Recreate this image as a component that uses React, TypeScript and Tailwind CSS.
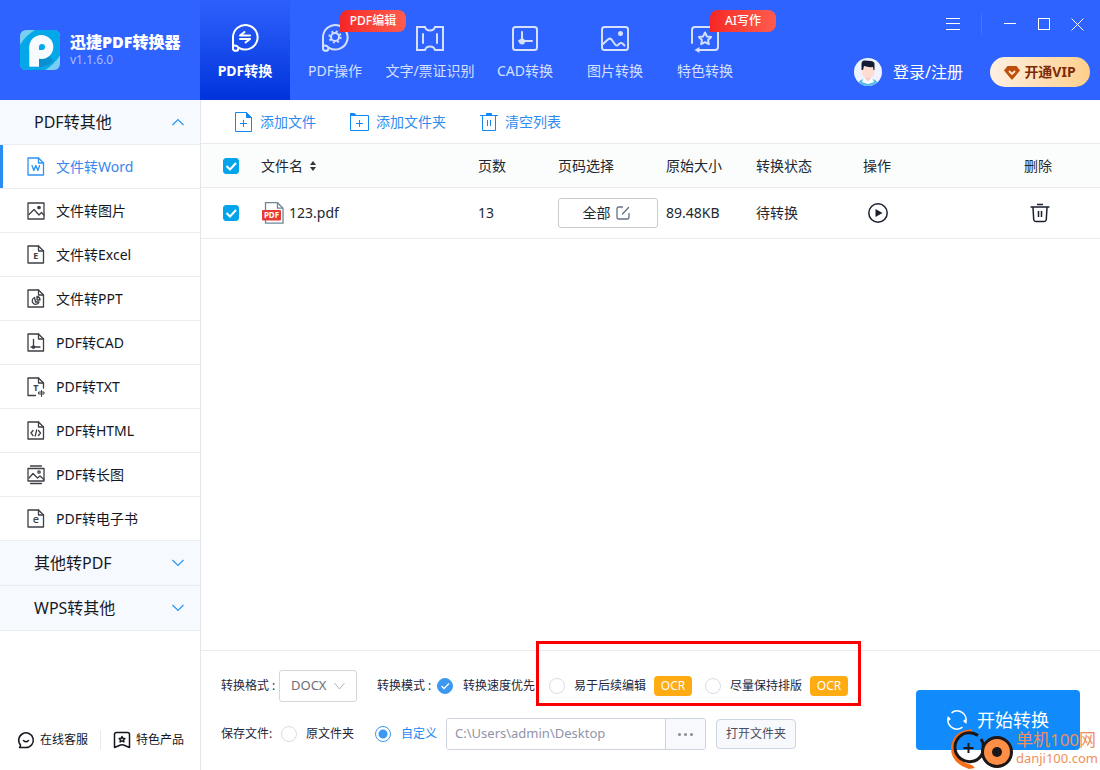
import { useState } from 'react';
import type { ReactNode } from 'react';
import clsx from 'clsx';

const BrandLogo = () => (
  <svg className="w-10 h-10 shrink-0 rounded-md" viewBox="0 0 40 40" aria-hidden="true">
    <rect width="40" height="40" fill="#78cff2" />
    <ellipse cx="20" cy="20" rx="30" ry="19" transform="rotate(-45 20 20)" fill="#04a8e9" />
    <path d="M19 25l3 4 7.500-2.500 4 4c-3 4-8 6.500-14.500 6.500z" fill="#0b8fd0" />
    <circle cx="21.300" cy="17" r="12" fill="#f7fbff" />
    <rect x="9.300" y="17" width="9.700" height="19.700" fill="#f7fbff" />
    <path d="M19 20v-3a3 3 0 1 1 3 3z" fill="#04a8e9" />
  </svg>
);

const Stroke = ({ children, size = 30, width = 2 }: { children: ReactNode; size?: number; width?: number }) => (
  <svg
    width={size}
    height={size}
    viewBox={`0 0 ${size} ${size}`}
    fill="none"
    stroke="currentColor"
    strokeWidth={width}
    strokeLinecap="round"
    strokeLinejoin="round"
    className="shrink-0"
    aria-hidden="true"
  >
    {children}
  </svg>
);

interface NavItem {
  label: string;
  wide?: boolean;
  badge?: string;
  icon: ReactNode;
}

const NAV: NavItem[] = [
  {
    label: 'PDF转换',
    icon: (
      <Stroke>
        <path d="M3 26V14a12.300 12.300 0 1 1 6 10.800" />
        <path d="M3 22.500c3.500-.5 5.500 1 5.300 3.300-.3 2.500-4.600 3-5.300 0" />
        <path d="M10 12.500h10M10 12.500l4.500-3.500M20 16h-10M20 16l-4.500 3.500" />
      </Stroke>
    ),
  },
  {
    label: 'PDF操作',
    badge: 'PDF编辑',
    icon: (
      <Stroke>
        <path d="M3 26V14a12.300 12.300 0 1 1 6 10.800" />
        <path d="M3 22.500c3.500-.5 5.500 1 5.300 3.300-.3 2.500-4.600 3-5.300 0" />
        <circle cx="15" cy="14" r="4" />
        <circle cx="15" cy="14" r="5.700" strokeWidth="1.800" strokeDasharray="2 2.480" strokeLinecap="butt" />
      </Stroke>
    ),
  },
  {
    label: '文字/票证识别',
    wide: true,
    icon: (
      <Stroke>
        <path d="M2 4h8q1 3.500 5 3.500T20 4h8v23h-8q-1-3.500-5-3.500T10 27H2z" strokeLinejoin="miter" />
        <path d="M8 11v9M22 11v9" />
      </Stroke>
    ),
  },
  {
    label: 'CAD转换',
    icon: (
      <Stroke>
        <rect x="3" y="4" width="24" height="23" rx="2.500" />
        <path d="M12 9v9h10M9 18h3v2" />
        <circle cx="12" cy="18.500" r="3" fill="currentColor" stroke="none" />
      </Stroke>
    ),
  },
  {
    label: '图片转换',
    icon: (
      <Stroke>
        <rect x="2" y="4" width="26" height="23" rx="2.500" />
        <circle cx="20.500" cy="10.500" r="2.500" fill="currentColor" stroke="none" />
        <path d="M3 21l5.500-5q1.500-1 3 .5l4 5.500q1.500 1 2.500 0l1.500-1.500q1.500-1 3 0l2 2" />
      </Stroke>
    ),
  },
  {
    label: '特色转换',
    badge: 'AI写作',
    icon: (
      <Stroke>
        <path d="M2 20V7q0-3 3-3h20q3 0 3 3v17q0 3-3 3H8" />
        <path d="M9.500 24v6l-5-3z" fill="currentColor" stroke="none" />
        <path d="M15 9.500l1.900 3.900 4.200.6-3 3 .7 4.200-3.800-2-3.800 2 .7-4.200-3-3 4.200-.6z" />
      </Stroke>
    ),
  },
];

const DocIcon = ({ children }: { children?: ReactNode }) => (
  <Stroke size={20} width={1.3}>
    <path d="M2 1h10.500l5 5v12H2z" />
    <path d="M12.500 1v5h5" />
    {children}
  </Stroke>
);

const IconText = ({ size = 8, weight = 700, children }: { size?: number; weight?: number; children: string }) => (
  <text
    x="9.800"
    y="14"
    fontSize={size}
    fontWeight={weight}
    textAnchor="middle"
    fill="currentColor"
    stroke="none"
  >
    {children}
  </text>
);

const MENU: { label: string; icon: ReactNode }[] = [
  { label: '文件转Word', icon: <DocIcon><path d="M6 8.500l1.800 5 2-5 2 5 1.800-5" /></DocIcon> },
  {
    label: '文件转图片',
    icon: (
      <Stroke size={20} width={1.3}>
        <rect x="2" y="2" width="16" height="16" />
        <path d="M3 13.500l5-5 5 5.500 2.500-2.500 2.500 2.500" />
        <circle cx="13" cy="6.500" r="1.200" fill="currentColor" />
      </Stroke>
    ),
  },
  { label: '文件转Excel', icon: <DocIcon><IconText size={9}>E</IconText></DocIcon> },
  {
    label: '文件转PPT',
    icon: (
      <DocIcon>
        <path d="M8.500 8.500a3.500 3.500 0 1 0 4.500 4.500H9.500z" />
        <path d="M11 7.500v3.500h3a3.500 3.500 0 0 0-3-3.500z" />
      </DocIcon>
    ),
  },
  {
    label: 'PDF转CAD',
    icon: (
      <DocIcon>
        <path d="M7.500 6.500v8M5 14h9" />
        <circle cx="7.500" cy="14" r="1.200" fill="currentColor" />
      </DocIcon>
    ),
  },
  {
    label: 'PDF转TXT',
    icon: (
      <Stroke size={20} width={1.3}>
        <path d="M9.500 18.500H2V1h10.500l5 5v5" />
        <path d="M12.500 1v5h5" />
        <IconText size={9}>T</IconText>
        <path d="M13 15h5v2h-5zM15.500 13.500v6" strokeWidth="1" />
      </Stroke>
    ),
  },
  { label: 'PDF转HTML', icon: <DocIcon><path d="M7 9.500l-2 2.500 2 2.500M12.500 9.500l2 2.500-2 2.500M10.700 9l-1.500 6" /></DocIcon> },
  {
    label: 'PDF转长图',
    icon: (
      <Stroke size={20} width={1.3}>
        <path d="M4.500 1h11M4.500 18.500h11" />
        <rect x="2" y="3.500" width="16" height="12.500" />
        <path d="M3 13l4-4.500 4.500 4.500 2.500-2 4 3.500" />
        <circle cx="13" cy="7" r="1.200" />
      </Stroke>
    ),
  },
  { label: 'PDF转电子书', icon: <DocIcon><IconText size={11} weight={500}>e</IconText></DocIcon> },
];

const Chevron = ({ up }: { up?: boolean }) => (
  <svg width="12" height="8" viewBox="0 0 12 8" fill="none" stroke="#2b93f5" strokeWidth="1.2" aria-hidden="true">
    <path d={up ? 'M.5 7L6 1.500 11.500 7' : 'M.5 1L6 6.500 11.500 1'} />
  </svg>
);

const GroupButton = ({ label, open }: { label: string; open?: boolean }) => (
  <button
    type="button"
    aria-expanded={!!open}
    className="flex h-[45px] w-full items-center justify-between border-b border-[#e9ecf1] bg-[#f6faff] pl-[34px] pr-4 text-base text-[#16191f]"
  >
    {label}
    <Chevron up={open} />
  </button>
);

const Check = ({ label }: { label: string }) => (
  <label className="relative block h-4 w-4">
    <input type="checkbox" defaultChecked aria-label={label} className="peer block h-4 w-4 appearance-none rounded-[3px] border border-[#03a4ea] checked:bg-[#03a4ea]" />
    <svg className="pointer-events-none absolute inset-0 hidden peer-checked:block" width="16" height="16" viewBox="0 0 16 16" fill="none" stroke="#fff" strokeWidth="2" aria-hidden="true">
      <path d="M3.500 8l3.500 3.500L13 5" />
    </svg>
  </label>
);

const Ocr = () => (
  <span className="ml-2 flex h-5 w-[38px] items-center justify-center rounded bg-[#ffab12] text-xs text-white">OCR</span>
);

const RADIO = 'h-4 w-4 shrink-0 appearance-none rounded-full border border-[#d8dce5] bg-white';

function Header() {
  const [active, setActive] = useState('PDF转换');

  return (
    <header className="flex h-[100px] shrink-0 bg-[#2f63ff] text-white">
      <div className="flex w-[200px] shrink-0 items-center gap-[10px] pl-5">
        <BrandLogo />
        <div className="whitespace-nowrap">
          <h1 className="text-base font-black leading-5">迅捷PDF转换器</h1>
          <p className="text-xs leading-4 text-[#a9bfff]">v1.1.6.0</p>
        </div>
      </div>

      <nav className="flex shrink-0">
        {NAV.map((item) => (
          <button
            key={item.label}
            type="button"
            onClick={() => setActive(item.label)}
            className={clsx(
              'relative flex flex-col items-center whitespace-nowrap pt-[23px] text-sm',
              item.wide ? 'w-[100px]' : 'w-[90px]',
              active === item.label
                ? 'bg-gradient-to-b from-[#2d60fb] to-[#0132dc] font-bold text-white'
                : 'text-[#d5e0ff]'
            )}
          >
            {item.icon}
            <span className="mt-2 leading-5">{item.label}</span>
            {item.badge && (
              <span className="absolute left-[50px] top-[10px] flex h-[22px] w-[66px] items-center justify-center rounded-lg rounded-bl-none bg-gradient-to-r from-[#f52525] to-[#ff5b4d] text-xs font-medium text-white">
                {item.badge}
              </span>
            )}
          </button>
        ))}
      </nav>

      <div className="ml-auto flex flex-col items-end pr-[10px] pt-3">
        <div className="flex h-6 items-center pr-[6px]">
          <button type="button" aria-label="菜单">
            <svg width="14" height="12" viewBox="0 0 14 12" stroke="#fff" aria-hidden="true">
              <path d="M0 .5h14M0 5.500h14M0 11.500h14" />
            </svg>
          </button>
          <span className="ml-[21px] h-5 w-px bg-[#4674ff]" />
          <button type="button" aria-label="最小化" className="ml-[22px]">
            <svg width="12" height="12" viewBox="0 0 12 12" stroke="#fff" aria-hidden="true">
              <path d="M0 5.500h12" />
            </svg>
          </button>
          <button type="button" aria-label="最大化" className="ml-[22px]">
            <svg width="12" height="12" viewBox="0 0 12 12" fill="none" stroke="#fff" aria-hidden="true">
              <rect x=".5" y=".5" width="11" height="11" />
            </svg>
          </button>
          <button type="button" aria-label="关闭" className="ml-[21px]">
            <svg width="13" height="13" viewBox="0 0 13 13" stroke="#fff" aria-hidden="true">
              <path d="M.5.5l12 12M12.500.5l-12 12" />
            </svg>
          </button>
        </div>

        <div className="mt-[21px] flex h-[30px] items-center">
          <a href="#login" className="flex items-center gap-[11px] text-base">
            <svg width="28" height="28" viewBox="0 0 28 28" aria-hidden="true">
              <clipPath id="avatar"><circle cx="14" cy="14" r="14" /></clipPath>
              <g clipPath="url(#avatar)">
                <rect width="28" height="28" fill="#eef3ff" />
                <path d="M3 28q1-6 7-7l4 2 4-2q6 1 7 7z" fill="#5bbdec" />
                <path d="M10 20l4 3 4-3 2 4-6 2-6-2z" fill="#fff" />
                <path d="M11.500 17h5v4l-2.500 2-2.500-2z" fill="#f8c9bd" />
                <path d="M8 9h12.500v5q0 6-6.200 6T8 14z" fill="#fddcd2" />
                <path d="M7.500 12V6q0-4 3.500-3.500l6 .5q4 .5 3.500 4V12h-1l-.5-3q-5 .5-9-1L9 12z" fill="#151d35" />
              </g>
            </svg>
            登录/注册
          </a>
          <button type="button" className="ml-[27px] flex h-[30px] w-[100px] items-center justify-center gap-1 rounded-full bg-gradient-to-r from-[#fff0e3] to-[#ffcf8a] text-sm font-bold text-[#7d2b0b]">
            <svg width="16" height="15" viewBox="0 0 16 15" aria-hidden="true">
              <path d="M3.500 1h9L16 5.500 8.500 14.500h-1L0 5.500z" fill="#bf4d0c" />
              <path d="M5 6l3 3 3-3" fill="none" stroke="#ffe6cb" strokeWidth="1.800" />
            </svg>
            开通VIP
          </button>
        </div>
      </div>
    </header>
  );
}

function Sidebar() {
  const [selected, setSelected] = useState(0);

  return (
    <aside className="flex w-[201px] shrink-0 flex-col border-r border-[#e4e6ea] bg-white">
      <GroupButton label="PDF转其他" open />
      <ul>
        {MENU.map((item, i) => (
          <li key={item.label}>
            <button
              type="button"
              onClick={() => setSelected(i)}
              className={clsx(
                'relative flex h-11 w-full items-center gap-[10px] border-b border-[#eceef2] pl-[26px] text-sm',
                i === selected ? 'text-[#3a86ee]' : 'text-[#14171d]'
              )}
            >
              {i === selected && <span className="absolute inset-y-0 left-0 w-[3px] bg-[#2b8cf3]" />}
              <span className={i === selected ? 'text-[#2b93f5]' : 'text-[#3c3f45]'}>{item.icon}</span>
              {item.label}
            </button>
          </li>
        ))}
      </ul>
      <GroupButton label="其他转PDF" />
      <GroupButton label="WPS转其他" />

      <div className="mt-auto flex h-[60px] items-center pl-[17px] text-xs text-[#14171d]">
        <a href="#service" className="flex items-center gap-[5px]">
          <Stroke size={18} width={1.5}>
            <path d="M3.500 14A7.300 7.300 0 1 1 9 16.500H2.500q1-1 1-2.500z" />
            <path d="M6.500 9.500q2.500 2.500 5 0" />
          </Stroke>
          在线客服
        </a>
        <span className="ml-3 h-5 w-px bg-[#e8e9ed]" />
        <a href="#products" className="ml-3 flex items-center gap-[5px]">
          <Stroke size={18} width={1.5}>
            <path d="M1.500 16.500v-13q0-2 2-2h11q2 0 2 2v13l-6-2.500q-1.500-.5-3 0z" />
            <path d="M9 5.500l.9 1.800 2 .2-1.400 1.400.4 2-1.900-1-1.900 1 .4-2L6.100 7.500l2-.2z" />
          </Stroke>
          特色产品
        </a>
      </div>
    </aside>
  );
}

function Toolbar() {
  const item = 'flex items-center gap-[7px]';
  return (
    <div className="flex h-[43px] shrink-0 items-center gap-[34px] pl-[34px] text-sm text-[#2f8bf0]">
      <button type="button" className={item}>
        <svg width="18" height="20" viewBox="0 0 18 20" fill="none" stroke="#1089f5" aria-hidden="true">
          <path d="M.5.5h11l5 5v14H.5z" />
          <path d="M11.500.5v5h5z" fill="#1089f5" />
          <path d="M5 11.500h7M8.500 8v7" />
        </svg>
        添加文件
      </button>
      <button type="button" className={item}>
        <svg width="19" height="19" viewBox="0 0 19 19" fill="none" stroke="#1089f5" aria-hidden="true">
          <path d="M.5 18.500h18v-15h-18z" />
          <path d="M.5 3.500v-2h4l1.500 2z" fill="#1089f5" />
          <path d="M6 11.500h7M9.500 8v7" />
        </svg>
        添加文件夹
      </button>
      <button type="button" className={item}>
        <svg width="18" height="20" viewBox="0 0 18 20" fill="none" stroke="#1089f5" aria-hidden="true">
          <path d="M2.500 3.500h13v15h-13zM0 3.500h18M7.500 8v6M10.500 8v6" />
          <path d="M6.500 1.500h5v2h-5z" fill="#1089f5" />
        </svg>
        清空列表
      </button>
    </div>
  );
}

function FileTable() {
  return (
    <table className="w-full table-fixed border-collapse text-left text-sm text-[#23272f]">
      <colgroup>
        <col className="w-[60px]" />
        <col />
        <col className="w-[80px]" />
        <col className="w-[108px]" />
        <col className="w-[90px]" />
        <col className="w-[107px]" />
        <col className="w-[161px]" />
        <col className="w-[76px]" />
      </colgroup>
      <thead>
        <tr className="h-11 border-y border-[#e9ebee] bg-[#fafdfc]">
          <th className="pl-[22px]"><Check label="全选" /></th>
          <th className="font-normal">
            <span className="flex items-center gap-[7px]">
              文件名
              <svg width="6" height="10" viewBox="0 0 6 10" fill="#30343b" aria-hidden="true">
                <path d="M3 0l3 4H0zM3 10l3-4H0z" />
              </svg>
            </span>
          </th>
          <th className="font-normal">页数</th>
          <th className="font-normal">页码选择</th>
          <th className="font-normal">原始大小</th>
          <th className="font-normal">转换状态</th>
          <th className="font-normal">操作</th>
          <th className="font-normal">删除</th>
        </tr>
      </thead>
      <tbody>
        <tr className="h-[51px] border-b border-[#e9ebee]">
          <td className="pl-[22px]"><Check label="123.pdf" /></td>
          <td>
            <span className="flex items-center gap-[5px] pl-px">
              <svg width="22" height="22" viewBox="0 0 22 22" aria-hidden="true">
                <path d="M3.500.7h12l5.500 5.500v15H3.500z" fill="#fff" stroke="#6e8796" strokeWidth="1.300" />
                <path d="M15.500.7v5.500H21" fill="none" stroke="#6e8796" strokeWidth="1.300" />
                <rect y="8" width="19" height="10.500" rx="1" fill="#e63b35" />
                <text x="9.500" y="16" fontSize="8" fontWeight="700" textAnchor="middle" fill="#fff">PDF</text>
              </svg>
              123.pdf
            </span>
          </td>
          <td>13</td>
          <td>
            <button type="button" className="flex h-[30px] w-[100px] items-center justify-center gap-[5px] rounded-[3px] border border-[#c9cbd0] pr-1">
              全部
              <svg width="14" height="14" viewBox="0 0 14 14" fill="none" stroke="#667085" strokeWidth="1.300" strokeLinecap="round" aria-hidden="true">
                <path d="M6.500 1H3Q1 1 1 3v8q0 2 2 2h8q2 0 2-2V7.500M6.500 8L12.500 1.500" />
              </svg>
            </button>
          </td>
          <td>89.48KB</td>
          <td>待转换</td>
          <td>
            <button type="button" aria-label="开始" className="ml-1 block">
              <svg width="22" height="22" viewBox="0 0 22 22" aria-hidden="true">
                <circle cx="11" cy="11" r="9.200" fill="none" stroke="#1a2030" strokeWidth="1.500" />
                <path d="M8.500 7l7 4-7 4z" fill="#1a2030" />
              </svg>
            </button>
          </td>
          <td>
            <button type="button" aria-label="删除" className="ml-[6px] block">
              <svg width="20" height="20" viewBox="0 0 20 20" fill="none" stroke="#1a2030" strokeWidth="1.500" aria-hidden="true">
                <path d="M7 1.500h6M.5 4h19M3 4l.7 12.500q.3 2 2 2h8.600q1.700 0 2-2L17 4M8.500 8v6M11.500 8v6" />
              </svg>
            </button>
          </td>
        </tr>
      </tbody>
    </table>
  );
}

function Watermark() {
  return (
    <div className="pointer-events-none absolute bottom-0 right-[2px] flex items-end gap-px text-[#ef9058]">
      <svg width="64" height="42" viewBox="0 0 64 42" fill="none" aria-hidden="true">
        <path d="M21 1Q1 3 0 20q0 15 18 21l6-1-3-3Q4 33 4 20 5 8 21 4z" fill="#f76d18" />
        <path d="M27 7.500A14.500 14.500 0 1 0 30 28q3-4 2-12" stroke="#1d1717" strokeWidth="3" />
        <path d="M17.500 15v10M12.500 20h10" stroke="#1d1717" strokeWidth="2" />
        <path d="M30 11q2 4 4 8 1-5 6-8" stroke="#1d1717" strokeWidth="3" />
        <circle cx="46" cy="24" r="14.500" fill="#ff8f46" stroke="#1d1717" strokeWidth="3" />
        <circle cx="46" cy="24" r="5" fill="#1d1717" />
      </svg>
      <div className="whitespace-nowrap leading-5">
        <p className="text-[17px]">单机100网</p>
        <p className="pb-1 text-[13px] leading-4">danji100.com</p>
      </div>
    </div>
  );
}

function Settings() {
  const [folder, setFolder] = useState('C:\\Users\\admin\\Desktop');

  return (
    <footer className="relative flex h-[120px] shrink-0 justify-between border-t border-[#eaebed] pl-5 pr-5 text-xs text-[#23263a]">
      <div className="flex flex-col gap-4 whitespace-nowrap pt-[19px]">
        <div className="flex h-8 items-center">
          <label htmlFor="format" className="w-[58px]">转换格式 :</label>
          <span className="relative">
            <select id="format" className="block h-8 w-[78px] appearance-none rounded-[3px] border border-[#d4d6dc] bg-white pl-[11px] text-[13px] text-[#6b6e75]">
              <option>DOCX</option>
            </select>
            <svg className="pointer-events-none absolute right-3 top-3" width="11" height="8" viewBox="0 0 11 8" fill="none" stroke="#b2b5bc" aria-hidden="true">
              <path d="M.5 1l5 6 5-6" />
            </svg>
          </span>
          <span className="ml-5 w-[60px]">转换模式 :</span>
          <label className="relative flex items-center gap-[10px]">
            <input type="radio" name="mode" defaultChecked className="peer h-4 w-4 appearance-none rounded-full border border-[#d8dce5] checked:border-[#3c98f0] checked:bg-[#3c98f0]" />
            <svg className="pointer-events-none absolute left-0 hidden peer-checked:block" width="16" height="16" viewBox="0 0 16 16" fill="none" stroke="#fff" strokeWidth="1.300" aria-hidden="true">
              <path d="M4.500 8l2.500 2.500 5-5" />
            </svg>
            转换速度优先
          </label>
          <div className="relative ml-[14px] flex items-center gap-[13px]">
            <label className="flex items-center">
              <input type="radio" name="mode" className={clsx(RADIO, 'mr-[9px]')} />
              易于后续编辑
              <Ocr />
            </label>
            <label className="flex items-center">
              <input type="radio" name="mode" className={clsx(RADIO, 'mr-[9px]')} />
              尽量保持排版
              <Ocr />
            </label>
            <span className="pointer-events-none absolute -bottom-[10px] -left-[13px] -right-[13px] -top-[35px] border-[3px] border-[#fb0000]" />
          </div>
        </div>

        <div className="flex h-8 items-center">
          <span className="w-[60px]">保存文件:</span>
          <label className="flex items-center gap-[9px]">
            <input type="radio" name="target" className={RADIO} />
            原文件夹
          </label>
          <label className="ml-[21px] flex items-center gap-[10px] text-[#1e88f2]">
            <input
              type="radio"
              name="target"
              defaultChecked
              className={clsx(RADIO, 'checked:border-[#3c98f0] checked:bg-[radial-gradient(circle,#3c98f0_4px,#fff_5px)]')}
            />
            自定义
          </label>
          <div className="ml-[9px] flex h-8 w-[260px] overflow-hidden rounded-[3px] border border-[#cdd3e0]">
            <input
              type="text"
              aria-label="保存路径"
              value={folder}
              onChange={(e) => setFolder(e.target.value)}
              className="min-w-0 flex-1 bg-white px-2 text-[13px] text-[#8f94a8]"
            />
            <button type="button" aria-label="浏览" className="flex w-10 items-center justify-center gap-[3px] border-l border-[#cdd3e0] bg-[#f7f9fc]">
              <i className="h-[3px] w-[3px] rounded-full bg-[#8a8d94]" />
              <i className="h-[3px] w-[3px] rounded-full bg-[#8a8d94]" />
              <i className="h-[3px] w-[3px] rounded-full bg-[#8a8d94]" />
            </button>
          </div>
          <button type="button" className="ml-[10px] h-[30px] w-20 rounded border border-[#ccd3e2] bg-[#f7f9fc] text-[#4a4e63]">
            打开文件夹
          </button>
        </div>
      </div>

      <button type="button" className="mt-[39px] flex h-[60px] w-[164px] shrink-0 items-center justify-center gap-[10px] rounded bg-[#118bfb] text-lg text-white">
        <svg width="20" height="20" viewBox="0 0 20 20" fill="none" stroke="#fff" strokeWidth="1.600" aria-hidden="true">
          <path d="M4.500 2.800A9 9 0 0 1 18.500 13M15.500 17.200A9 9 0 0 1 1.500 7" />
          <path d="M.5 6l3.500 3-2.500 2zM19.500 14l-3.500-3 2.500-2z" fill="#fff" stroke="none" />
        </svg>
        开始转换
      </button>
      <Watermark />
    </footer>
  );
}

export default function App() {
  return (
    <div className="flex min-h-screen flex-col bg-white font-['Noto_Sans','Noto_Sans_CJK_SC',sans-serif]">
      <Header />
      <div className="flex flex-1">
        <Sidebar />
        <main className="flex min-w-0 flex-1 flex-col">
          <Toolbar />
          <div className="flex-1">
            <FileTable />
          </div>
          <Settings />
        </main>
      </div>
    </div>
  );
}
